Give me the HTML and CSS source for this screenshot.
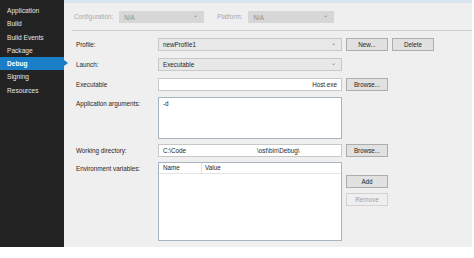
FILE: index.html
```html
<!DOCTYPE html>
<html lang="en">
<head>
    <meta charset="UTF-8">
    <title>Debug properties</title>
    <link rel="stylesheet" href="styles.css">
</head>
<body>
    <div class="window">
        <nav class="side">
            <div class="tab">Application</div>
            <div class="tab">Build</div>
            <div class="tab">Build Events</div>
            <div class="tab">Package</div>
            <div class="tab active">Debug</div>
            <div class="tab">Signing</div>
            <div class="tab">Resources</div>
        </nav>

        <main class="panel">
            <div class="config">
                <span class="dim">Configuration:</span>
                <div class="combo off w-cfg">N/A<span class="arrow">⌄</span></div>
                <span class="dim plat">Platform:</span>
                <div class="combo off w-plat">N/A<span class="arrow">⌄</span></div>
            </div>

            <div class="form">
                <label>Profile:</label>
                <div class="combo">newProfile1<span class="arrow">⌄</span></div>
                <div class="btns"><button>New...</button><button>Delete</button></div>

                <label>Launch:</label>
                <div class="combo">Executable<span class="arrow">⌄</span></div>
                <div></div>

                <label>Executable</label>
                <div class="box right">Host.exe</div>
                <div class="btns"><button>Browse...</button></div>

                <label>Application arguments:</label>
                <div class="box area">-d</div>
                <div></div>

                <label>Working directory:</label>
                <div class="box split"><span>C:\Code</span><span class="tail">\ost\bin\Debug\</span></div>
                <div class="btns"><button>Browse...</button></div>

                <label>Environment variables:</label>
                <div class="list">
                    <div class="head"><span class="c1">Name</span><span>Value</span></div>
                </div>
                <div class="stack">
                    <button>Add</button>
                    <button disabled>Remove</button>
                </div>
            </div>
        </main>
    </div>
</body>
</html>
```

FILE: styles.css
```css
body { margin: 0; background: #fff; font-family: "Liberation Sans", Arial, sans-serif; font-size: 6.3px; color: #262626; }
.window { display: flex; width: 472px; height: 247px; }

.side { width: 64px; background: #232323; padding-top: 4px; box-sizing: border-box; }
.tab { color: #e6e6e6; font-size: 6.6px; height: 13.3px; line-height: 13.3px; padding-left: 7px; position: relative; }
.tab.active { background: #1b7fc8; color: #fff; font-weight: bold; }
.tab.active::after { content: ""; position: absolute; right: -4px; top: 3px; border-left: 4px solid #1b7fc8; border-top: 3.6px solid transparent; border-bottom: 3.6px solid transparent; }

.panel { flex: 1; background: #efefef; border-top: 3px solid #d9e6ef; box-sizing: border-box; padding-left: 8px; }
.config { display: flex; align-items: center; height: 27px; border-bottom: 1px solid #cdcdcd; padding-left: 2px; }
.dim { color: #a9a9a9; margin-right: 6px; }
.plat { margin-left: 13px; }
.combo { position: relative; height: 12px; line-height: 11px; border: 1px solid #c8c8c8; background: #e8e8e8; padding-left: 4px; box-sizing: border-box; }
.combo.off { background: #d7d7d7; border-color: #d7d7d7; color: #8e8e8e; }
.w-cfg { width: 85px; }
.w-plat { width: 86px; }
.arrow { position: absolute; right: 5px; top: -2px; font-size: 6px; color: #7a7a7a; }

.form { display: grid; grid-template-columns: 82px 184px auto; grid-template-rows: 20px 20px 19px 47px 18px auto; align-items: start; padding: 7px 0 0 4px; }
.form label { line-height: 13px; }
.form .combo, .box { height: 13px; line-height: 12px; }
.box { border: 1px solid #c8c8c8; background: #fff; padding: 0 4px; box-sizing: border-box; }
.box.right { text-align: right; }
.box.area { height: 42px; border-color: #a8b4c2; }
.box.split { display: flex; }
.tail { margin-left: 71px; }

.btns { display: flex; gap: 4px; padding-left: 4px; }
button { font: inherit; color: #262626; width: 42px; height: 13px; padding: 0; background: #e1e1e1; border: 1px solid #adadad; box-sizing: border-box; }
button:disabled { background: #efefef; border-color: #d2d2d2; color: #a0a0a0; }

.list { height: 79px; border: 1px solid #a8b4c2; background: #fff; box-sizing: border-box; }
.head { height: 10px; line-height: 9px; border-bottom: 1px solid #e4e4e4; padding-left: 4px; display: flex; }
.c1 { width: 38px; border-right: 1px solid #e4e4e4; margin-right: 3px; }
.stack { display: flex; flex-direction: column; gap: 5px; padding: 13px 0 0 4px; }
```
